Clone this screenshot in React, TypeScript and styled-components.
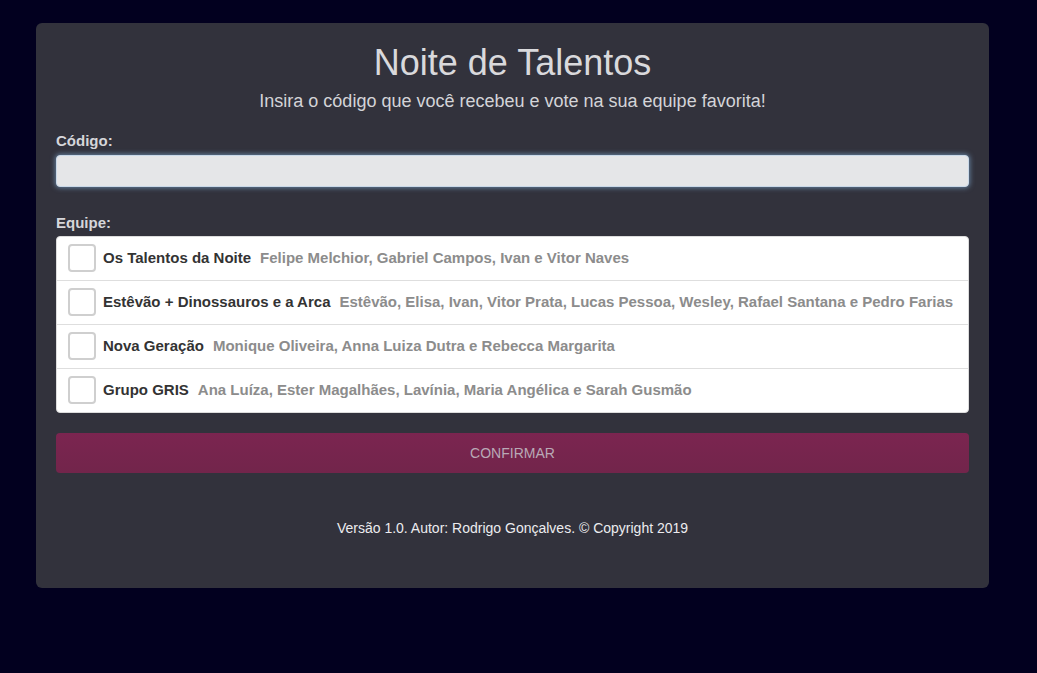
import React, { useState } from 'react';
import styled, { createGlobalStyle } from 'styled-components';

// teams shown in the vote list
const teams = [
  { name: 'Os Talentos da Noite', members: 'Felipe Melchior, Gabriel Campos, Ivan e Vitor Naves' },
  {
    name: 'Estêvão + Dinossauros e a Arca',
    members: 'Estêvão, Elisa, Ivan, Vitor Prata, Lucas Pessoa, Wesley, Rafael Santana e Pedro Farias',
  },
  { name: 'Nova Geração', members: 'Monique Oliveira, Anna Luiza Dutra e Rebecca Margarita' },
  { name: 'Grupo GRIS', members: 'Ana Luíza, Ester Magalhães, Lavínia, Maria Angélica e Sarah Gusmão' },
];

const GlobalStyle = createGlobalStyle`
  html, body {
    margin: 0;
    padding: 0;
    background-color: #02001f;
    font-family: "Liberation Sans", Arial, sans-serif;
  }
  * {
    box-sizing: border-box;
  }
`;

export default function App() {
  const [code, setCode] = useState('');
  const [selected, setSelected] = useState<number | null>(null);

  return (
    <>
      <GlobalStyle />
      <Page>
        <Card>
          <Title>Noite de Talentos</Title>
          <Subtitle>Insira o código que você recebeu e vote na sua equipe favorita!</Subtitle>

          <Label htmlFor='codigo'>Código:</Label>
          <CodeInput id='codigo' type='text' value={code} onChange={(e) => setCode(e.target.value)} />

          <Label $gap={26}>Equipe:</Label>
          <TeamList>
            {teams.map((team, i) => (
              <TeamRow key={team.name} onClick={() => setSelected(i)}>
                <CheckBox $checked={selected === i} />
                <TeamName>{team.name}</TeamName>
                <Members>{team.members}</Members>
              </TeamRow>
            ))}
          </TeamList>

          <ConfirmButton type='button'>CONFIRMAR</ConfirmButton>

          <Footer>Versão 1.0. Autor: Rodrigo Gonçalves. © Copyright 2019</Footer>
        </Card>
      </Page>
    </>
  );
}

const Page = styled.div`
  min-height: 673px;
  padding-top: 23px;
  padding-left: 36px;
`;

const Card = styled.div`
  width: 953px;
  background-color: #32323c;
  border-radius: 6px;
  padding: 20px 20px 50px;
  display: flex;
  flex-direction: column;
`;

const Title = styled.h1`
  margin: 0;
  font-size: 36px;
  line-height: 40px;
  font-weight: 400;
  color: #d9d9dc;
  text-align: center;
`;

const Subtitle = styled.p`
  margin: 6px 0 0;
  font-size: 18px;
  line-height: 24px;
  color: #d4d4d8;
  text-align: center;
`;

const Label = styled.label<{ $gap?: number }>`
  margin-top: ${(p) => p.$gap ?? 18}px;
  font-size: 15px;
  line-height: 20px;
  font-weight: 700;
  color: #d6d6da;
`;

const CodeInput = styled.input`
  margin-top: 4px;
  height: 32px;
  width: 100%;
  border: 1px solid #c9d8e8;
  border-radius: 4px;
  background-color: #e5e6e8;
  padding: 0 10px;
  font-family: inherit;
  font-size: 15px;
  outline: none;
  box-shadow: 0 0 5px 1px rgba(140, 190, 235, 0.55);
`;

const TeamList = styled.div`
  margin-top: 3px;
  background-color: #ffffff;
  border: 1px solid #dcdcdc;
  border-radius: 4px;
  display: flex;
  flex-direction: column;
`;

const TeamRow = styled.div`
  height: 43px;
  display: flex;
  align-items: center;
  padding: 0 0 2px 11px;
  cursor: pointer;
  white-space: nowrap;
  & + & {
    height: 44px;
    border-top: 1px solid #dedede;
  }
`;

const CheckBox = styled.span<{ $checked: boolean }>`
  width: 28px;
  height: 28px;
  flex-shrink: 0;
  border: 2px solid #cfcfcf;
  border-radius: 4px;
  background-color: ${(p) => (p.$checked ? '#782550' : '#ffffff')};
  margin-right: 7px;
`;

const TeamName = styled.span`
  font-size: 15px;
  font-weight: 700;
  color: #333333;
  margin-right: 9px;
`;

const Members = styled.span`
  font-size: 15px;
  font-weight: 700;
  color: #8c8c8c;
`;

const ConfirmButton = styled.button`
  margin-top: 20px;
  height: 40px;
  width: 100%;
  border: none;
  border-radius: 4px;
  background: linear-gradient(#7b2550, #72254b);
  color: #b9a9b6;
  font-family: inherit;
  font-size: 14px;
  cursor: pointer;
`;

const Footer = styled.p`
  margin: 45px 0 0;
  font-size: 14px;
  line-height: 20px;
  color: #ececef;
  text-align: center;
`;
